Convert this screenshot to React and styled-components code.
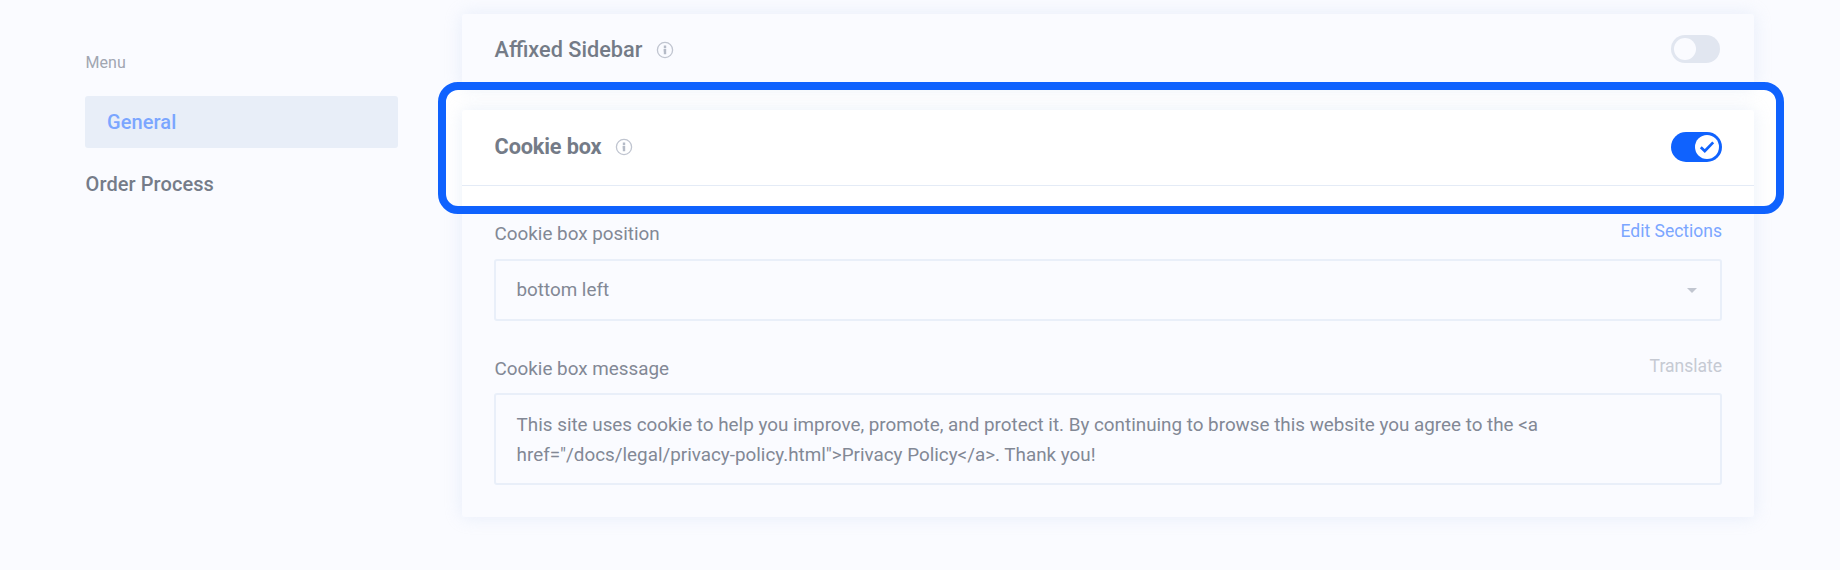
import React from "react";
import styled, { createGlobalStyle, css } from "styled-components";

const GlobalStyle = createGlobalStyle`
  *, *::before, *::after { box-sizing: border-box; }
  body {
    margin: 0;
    background: #fafbff;
    font-family: Roboto, "Liberation Sans", sans-serif;
    color: #757c89;
  }
`;

const Page = styled.div`
  display: flex;
  width: 1840px;
  height: 570px;
  overflow: hidden;
  background: #fafbff;
`;

const Sidebar = styled.nav`
  display: flex;
  flex-direction: column;
  width: 398px;
  padding: 50px 0 0 85px;
`;

const MenuTitle = styled.div`
  height: 46px;
  padding-left: 0.6px;
  font-size: 16px;
  line-height: 26px;
  color: #a1a6b1;
`;

const MenuItem = styled.a`
  display: block;
  height: 52px;
  margin-bottom: 10px;
  padding-left: 0.6px;
  font-size: 20px;
  font-weight: 500;
  line-height: 52px;
  letter-spacing: 0.08px;
  color: #757c89;
  ${(p) =>
    p.$active &&
    css`
      padding-left: 22px;
      border-radius: 3px;
      background: #e8eef8;
      color: #7ba6ff;
    `}
`;

const Content = styled.main`
  position: relative;
  isolation: isolate;
  display: flex;
  flex-direction: column;
  gap: 22px;
  width: 1292px;
  margin-left: 64px;
  padding-top: 14px;
`;

const Card = styled.section`
  flex: none;
  height: ${(p) => p.$height}px;
  border-radius: 3px;
  box-shadow: 0 0 18px rgba(205, 220, 240, 0.42);
`;

const CardHeader = styled.header`
  display: flex;
  align-items: center;
  justify-content: space-between;
  height: ${(p) => (p.$divided ? 76 : 72)}px;
  padding: 0 32px 2px 32.6px;
  border-bottom: ${(p) => (p.$divided ? "1px solid #e4ebf6" : "0")};
`;

const Heading = styled.h2`
  display: flex;
  align-items: center;
  gap: 14px;
  margin: 0;
  padding-top: ${(p) => p.$drop || 0}px;
  font-size: 21.7px;
  font-weight: ${(p) => p.$weight};
  line-height: 30px;
  letter-spacing: ${(p) => p.$spacing || 0}px;
  color: #747b87;
`;

const InfoSvg = styled.svg`
  display: block;
  width: 18px;
  height: 18px;
`;

const Switch = styled.span`
  display: flex;
  align-items: center;
  justify-content: ${(p) => (p.$on ? "flex-end" : "flex-start")};
  width: ${(p) => (p.$on ? 51 : 49)}px;
  height: ${(p) => (p.$on ? 30 : 28)}px;
  margin-right: ${(p) => (p.$on ? 0 : 2)}px;
  padding: 0 3px;
  border-radius: 15px;
  background: ${(p) => (p.$on ? "#0f62fe" : "#e1e6f0")};
`;

const Knob = styled.span`
  display: flex;
  align-items: center;
  justify-content: center;
  width: ${(p) => (p.$on ? 24 : 22)}px;
  height: ${(p) => (p.$on ? 24 : 22)}px;
  border-radius: 50%;
  background: ${(p) => (p.$on ? "#ffffff" : "#fafbff")};
`;

const CardBody = styled.div`
  display: flex;
  flex-direction: column;
  padding: 34px 32px 0;
`;

const Field = styled.div`
  display: flex;
  flex-direction: column;
  margin-bottom: ${(p) => p.$gap || 0}px;
`;

const FieldTop = styled.div`
  display: flex;
  justify-content: space-between;
  height: ${(p) => p.$height}px;
  padding-left: 0.6px;
`;

const Label = styled.label`
  font-size: 18.84px;
  line-height: 28px;
  color: #828895;
`;

const Action = styled.a`
  font-size: 17.5px;
  line-height: 23px;
  color: ${(p) => (p.$muted ? "#c6cad3" : "#7ba6ff")};
`;

const Select = styled.div`
  display: flex;
  align-items: center;
  justify-content: space-between;
  height: 62px;
  padding: 0 23px 0 20.5px;
  border: 2px solid #e9eff9;
  border-radius: 3px;
  font-size: 18.84px;
  color: #828895;
`;

const Caret = styled.span`
  border: 5px solid transparent;
  border-top: 5px solid #c1c6d0;
  border-bottom: 0;
`;

const Message = styled.div`
  height: 92px;
  padding: 15px 20.6px 0;
  border: 2px solid #e9eff9;
  border-radius: 3px;
  font-size: 18.84px;
  line-height: 30px;
  color: #828895;
  white-space: pre-line;
`;

const spotlightArea = css`
  position: absolute;
  top: 82px;
  left: -24px;
  width: 1346px;
  height: 132px;
  border-radius: 20px;
`;

const SpotlightFill = styled.div`
  ${spotlightArea}
  z-index: -1;
  background: #ffffff;
`;

const SpotlightRing = styled.div`
  ${spotlightArea}
  border: 8px solid #0f62fe;
  pointer-events: none;
`;

function InfoIcon() {
  return (
    <InfoSvg viewBox="0 0 18 18" fill="none">
      <circle cx="9" cy="9" r="7.6" stroke="#c0c5d0" strokeWidth="1.3" />
      <path d="M9 4.6v2.6M7.6 9.2H9v4" stroke="#b5bbc7" strokeWidth="2.4" />
    </InfoSvg>
  );
}

function Toggle({ on }) {
  return (
    <Switch $on={on} role="switch" aria-checked={on}>
      <Knob $on={on}>
        {on && (
          <svg width="16" height="14" viewBox="0 0 16 14" fill="none">
            <path d="M1.8 7.2 5.8 11 14.2 2.4" stroke="#0f62fe" strokeWidth="2.7" />
          </svg>
        )}
      </Knob>
    </Switch>
  );
}

const message =
  'This site uses cookie to help you improve, promote, and protect it. By continuing to browse this website you agree to the <a\nhref="/docs/legal/privacy-policy.html">Privacy Policy</a>. Thank you!';

export default function App() {
  return (
    <>
      <GlobalStyle />
      <Page>
        <Sidebar>
          <MenuTitle>Menu</MenuTitle>
          <MenuItem $active>General</MenuItem>
          <MenuItem>Order Process</MenuItem>
        </Sidebar>
        <Content>
          <SpotlightFill />
          <Card $height={74}>
            <CardHeader>
              <Heading $weight={500} $drop={2}>
                Affixed Sidebar
                <InfoIcon />
              </Heading>
              <Toggle on={false} />
            </CardHeader>
          </Card>
          <Card $height={407}>
            <CardHeader $divided>
              <Heading $weight={700} $spacing={-0.15}>
                Cookie box
                <InfoIcon />
              </Heading>
              <Toggle on />
            </CardHeader>
            <CardBody>
              <Field $gap={34}>
                <FieldTop $height={39}>
                  <Label>Cookie box position</Label>
                  <Action>Edit Sections</Action>
                </FieldTop>
                <Select>
                  bottom left
                  <Caret />
                </Select>
              </Field>
              <Field>
                <FieldTop $height={38}>
                  <Label>Cookie box message</Label>
                  <Action $muted>Translate</Action>
                </FieldTop>
                <Message>{message}</Message>
              </Field>
            </CardBody>
          </Card>
          <SpotlightRing />
        </Content>
      </Page>
    </>
  );
}
